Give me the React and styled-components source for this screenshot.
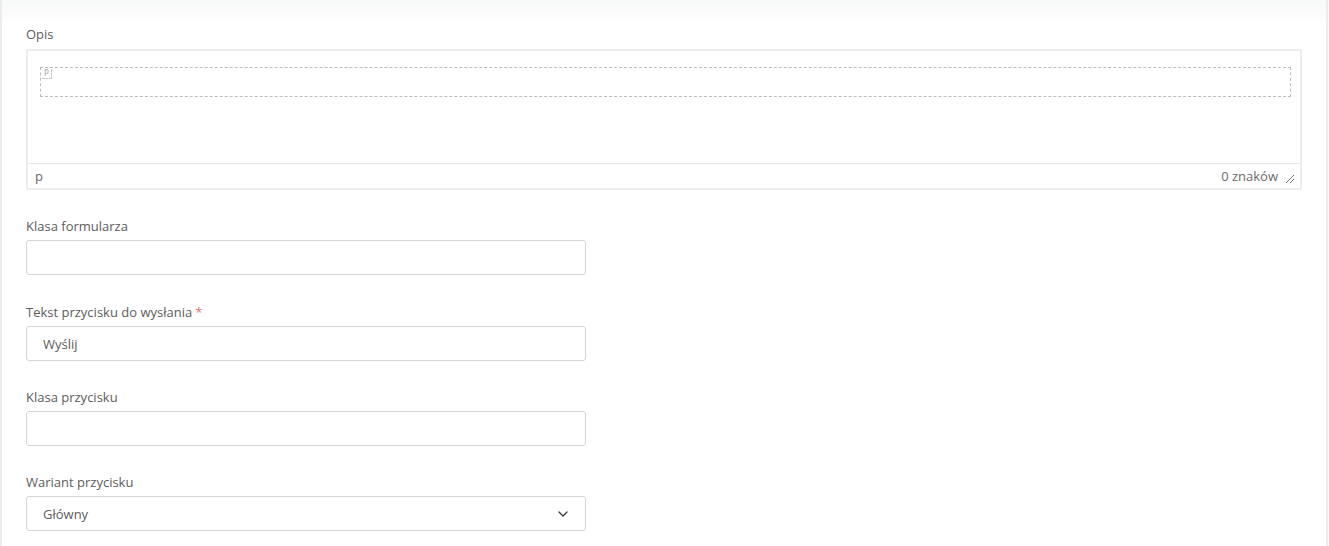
import React from "react";
import styled, { createGlobalStyle } from "styled-components";
import { ChevronDown } from "lucide-react";

const Global = createGlobalStyle`
  html, body { margin: 0; padding: 0; background: #fff; }
  body { font-family: "Open Sans", "Noto Sans", sans-serif; color: #5c5c5c; }
  * { box-sizing: border-box; }
`;

const Page = styled.div`
  display: flex;
  min-height: 546px;
  width: 1329px;
`;

const LeftStrip = styled.div`
  width: 2px;
  flex: none;
  background: #e8edf2;
`;

const Main = styled.main`
  flex: 1;
  padding: 24px 24px 15px 24px;
  background: linear-gradient(to bottom, #f7f8f8 0px, #fcfcfc 16px, #ffffff 24px);
  border-right: 2px solid #eaecef;
  margin-right: 1px;
`;

const Field = styled.div`
  margin-bottom: ${(p) => p.$gap ?? 26}px;
`;

const Label = styled.label`
  display: block;
  font-size: 13px;
  line-height: 20px;
  color: #5c5c5c;
  margin-bottom: ${(p) => p.$mb || 4}px;
`;

const Req = styled.span`
  color: #e5737a;
  margin-left: 3px;
`;

const Editor = styled.div`
  border: 2px solid #ececec;
  border-radius: 1px;
  background: #fff;
`;

const EditArea = styled.div`
  height: 112px;
  padding: 16px 9px 0 12px;
`;

const Block = styled.div`
  position: relative;
  height: 30px;
  border: 1px dashed #bdbdbd;
`;

const BlockTag = styled.span`
  position: absolute;
  top: 1px;
  left: 1px;
  font-size: 8px;
  line-height: 9px;
  color: #aaa;
  padding: 0 2px;
  border-right: 1px dashed #c8c8c8;
  border-bottom: 1px dashed #c8c8c8;
  font-family: "DejaVu Sans", sans-serif;
`;

const StatusBar = styled.div`
  display: flex;
  align-items: center;
  height: 25px;
  border-top: 1px solid #e4e4e4;
  padding: 0 5px 0 7px;
  font-size: 13px;
  color: #6a6a6a;
`;

const Path = styled.span`
  flex: 1;
`;

const Count = styled.span`
  margin-right: 7px;
`;

const Grip = styled.svg`
  width: 10px;
  height: 10px;
  margin-top: 5px;
`;

const Input = styled.div`
  width: 560px;
  height: 35px;
  border: 1px solid #d3d6da;
  border-radius: 3px;
  padding: 0 16px;
  display: flex;
  align-items: center;
  font-size: 13px;
  color: #5c5c5c;
`;

const Select = styled(Input)`
  justify-content: space-between;
  padding-right: 14px;
`;

export default function App() {
  return (
    <>
      <Global />
      <Page>
        <LeftStrip />
        <Main>
          <Field $gap={26}>
            <Label $mb={5}>Opis</Label>
            <Editor>
              <EditArea>
                <Block>
                  <BlockTag>P</BlockTag>
                </Block>
              </EditArea>
              <StatusBar>
                <Path>p</Path>
                <Count>0 znaków</Count>
                <Grip viewBox="0 0 10 10">
                  <path d="M1 9 L9 1 M5 9 L9 5" stroke="#777" strokeWidth="1" fill="none" />
                </Grip>
              </StatusBar>
            </Editor>
          </Field>
          <Field $gap={27}>
            <Label>Klasa formularza</Label>
            <Input />
          </Field>
          <Field>
            <Label>
              Tekst przycisku do wysłania<Req>*</Req>
            </Label>
            <Input>Wyślij</Input>
          </Field>
          <Field>
            <Label>Klasa przycisku</Label>
            <Input />
          </Field>
          <Field $gap={0}>
            <Label>Wariant przycisku</Label>
            <Select>
              <span>Główny</span>
              <ChevronDown size={16} color="#333" strokeWidth={1.8} />
            </Select>
          </Field>
        </Main>
      </Page>
    </>
  );
}
